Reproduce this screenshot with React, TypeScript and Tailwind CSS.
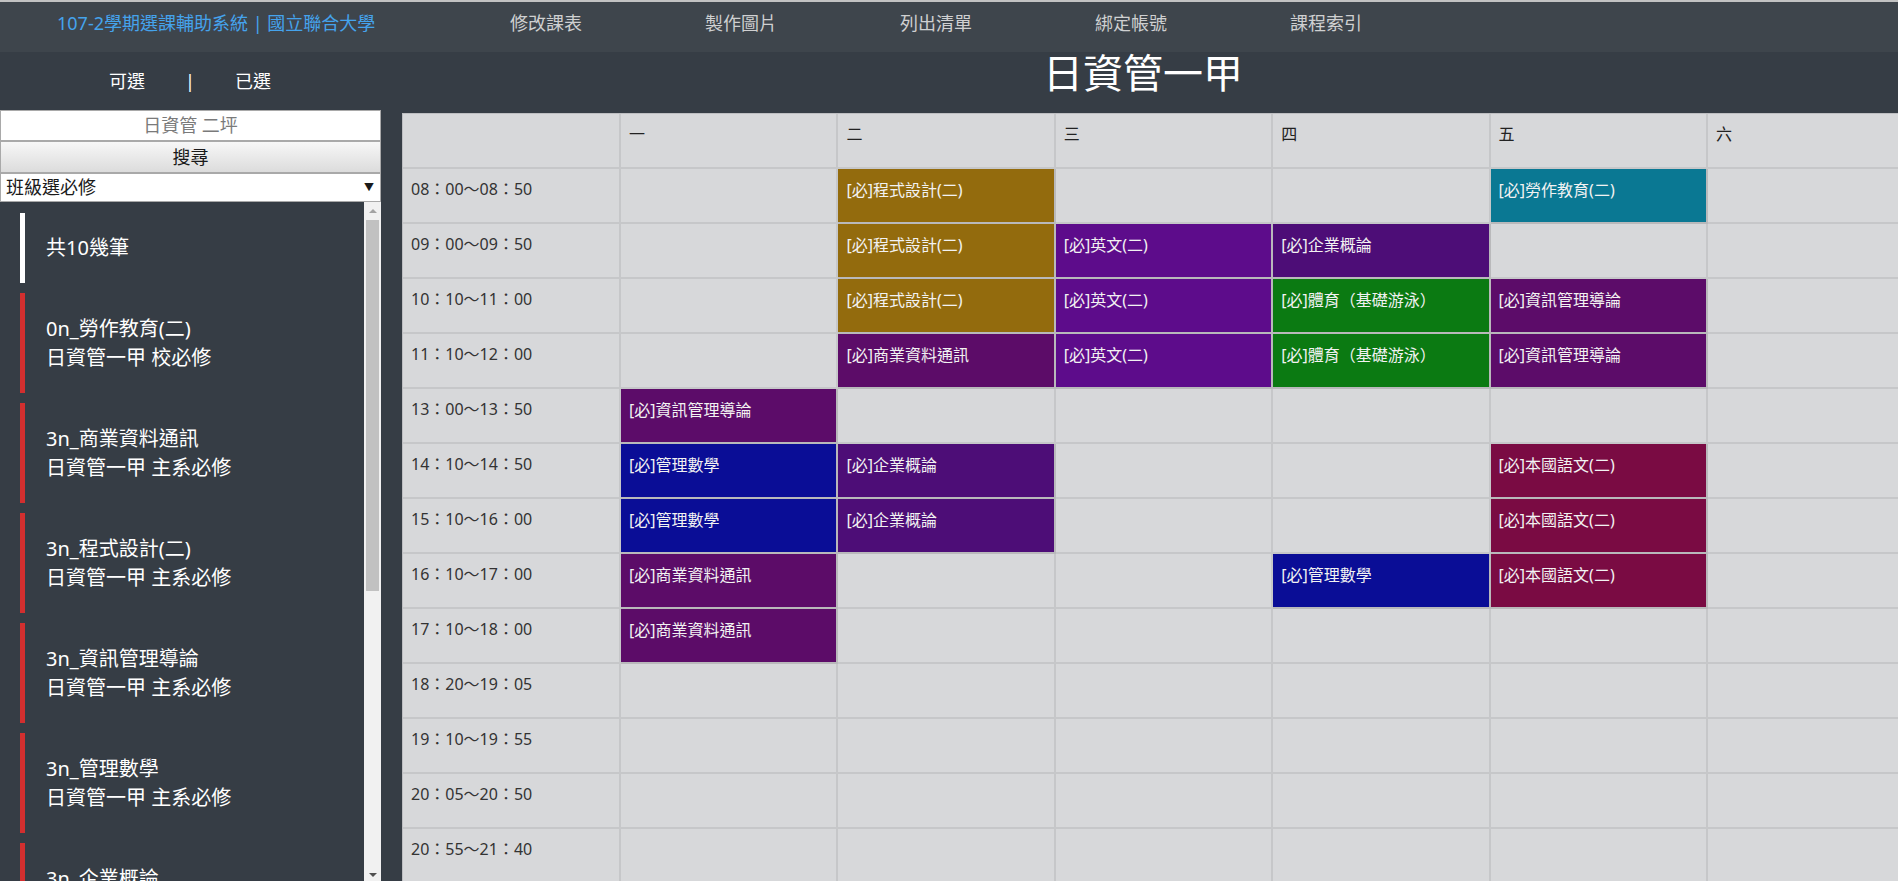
const NAV = ["修改課表", "製作圖片", "列出清單", "綁定帳號", "課程索引"];

const DAYS = ["一", "二", "三", "四", "五", "六"];

const TIMES = [
  "08：00～08：50",
  "09：00～09：50",
  "10：10～11：00",
  "11：10～12：00",
  "13：00～13：50",
  "14：10～14：50",
  "15：10～16：00",
  "16：10～17：00",
  "17：10～18：00",
  "18：20～19：05",
  "19：10～19：55",
  "20：05～20：50",
  "20：55～21：40",
];

type Course = { name: string; bg: string };

const PROG: Course = { name: "[必]程式設計(二)", bg: "bg-[#936b0d]" };
const ENG: Course = { name: "[必]英文(二)", bg: "bg-[#5d0c8b]" };
const BIZ: Course = { name: "[必]企業概論", bg: "bg-[#4d0d77]" };
const PE: Course = { name: "[必]體育（基礎游泳）", bg: "bg-[#0b7a12]" };
const LABOR: Course = { name: "[必]勞作教育(二)", bg: "bg-[#0a7893]" };
const MIS: Course = { name: "[必]資訊管理導論", bg: "bg-[#5c0c69]" };
const COMM: Course = { name: "[必]商業資料通訊", bg: "bg-[#5c0c68]" };
const MATH: Course = { name: "[必]管理數學", bg: "bg-[#0a0d96]" };
const CHIN: Course = { name: "[必]本國語文(二)", bg: "bg-[#7a0b43]" };

const _ = null;

const SCHEDULE: (Course | null)[][] = [
  [_, PROG, _, _, LABOR, _],
  [_, PROG, ENG, BIZ, _, _],
  [_, PROG, ENG, PE, MIS, _],
  [_, COMM, ENG, PE, MIS, _],
  [MIS, _, _, _, _, _],
  [MATH, BIZ, _, _, CHIN, _],
  [MATH, BIZ, _, _, CHIN, _],
  [COMM, _, _, MATH, CHIN, _],
  [COMM, _, _, _, _, _],
  [_, _, _, _, _, _],
  [_, _, _, _, _, _],
  [_, _, _, _, _, _],
  [_, _, _, _, _, _],
];

const LIST = [
  { title: "0n_勞作教育(二)", sub: "日資管一甲 校必修" },
  { title: "3n_商業資料通訊", sub: "日資管一甲 主系必修" },
  { title: "3n_程式設計(二)", sub: "日資管一甲 主系必修" },
  { title: "3n_資訊管理導論", sub: "日資管一甲 主系必修" },
  { title: "3n_管理數學", sub: "日資管一甲 主系必修" },
  { title: "3n_企業概論", sub: "日資管一甲 主系必修" },
  { title: "3n_英文(二)", sub: "日資管一甲 校必修" },
];

export default function App() {
  return (
    <div className="h-screen w-full overflow-hidden bg-[#363d45] font-['Noto_Sans','Noto_Sans_CJK_TC',sans-serif]">
      {/* top nav */}
      <div className="flex h-[52px] border-t-2 border-[#c2c2c2] bg-[#3e454c] pt-[9px]">
        <div className="w-[510px] pl-[57px] text-[18px] leading-[24px] text-[#45a3ec]">
          107-2學期選課輔助系統 | 國立聯合大學
        </div>
        {NAV.map((n) => (
          <div key={n} className="w-[195px] text-[18px] leading-[24px] text-[#cfd0d1]">
            {n}
          </div>
        ))}
      </div>

      <div className="flex">
        {/* sidebar */}
        <div className="flex w-[381px] shrink-0 flex-col">
          <div className="flex h-[58px] items-center text-[18px] text-white">
            <span className="ml-[109px]">可選</span>
            <span className="ml-[40px]">|</span>
            <span className="ml-[40px]">已選</span>
          </div>
          <div className="flex h-[31px] items-center justify-center border border-[#a9a9a9] bg-white text-[18px] text-[#7a7a7a]">
            日資管 二坪
          </div>
          <div className="flex h-[32px] items-center justify-center border border-[#a9a9a9] bg-gradient-to-b from-[#f7f7f7] to-[#dcdcdc] text-[18px] text-[#1a1a1a]">
            搜尋
          </div>
          <div className="flex h-[29px] items-center justify-between border border-[#a9a9a9] bg-white pl-[5px] pr-[6px] text-[18px] text-[#1a1a1a]">
            <span>班級選必修</span>
            <span className="text-[10px]">▼</span>
          </div>
          <div className="flex h-[680px]">
            <div className="flex-1 overflow-hidden pt-[11px]">
              <div className="mb-[10px] ml-[20px] border-l-[5px] border-white py-[21px] pl-[21px] text-[20px] leading-[28px] text-white">
                共10幾筆
              </div>
              {LIST.map((it) => (
                <div
                  key={it.title}
                  className="mb-[10px] ml-[20px] border-l-[5px] border-[#d32f2f] py-[21px] pl-[21px] text-[20px] leading-[29px] text-white"
                >
                  <div>{it.title}</div>
                  <div>{it.sub}</div>
                </div>
              ))}
            </div>
            <div className="flex w-[17px] flex-col items-center bg-[#f1f1f1]">
              <div className="mt-[7px] h-0 w-0 border-x-[4px] border-b-[4px] border-x-transparent border-b-[#a3a3a3]" />
              <div className="mt-[7px] h-[371px] w-[13px] bg-[#c1c1c1]" />
              <div className="flex-1" />
              <div className="mb-[5px] h-0 w-0 border-x-[4px] border-t-[4px] border-x-transparent border-t-[#505050]" />
            </div>
          </div>
        </div>

        {/* main */}
        <div className="min-w-0 flex-1">
          <div className="h-[61px] pl-[7px] pt-[1px] text-center text-[40px] leading-[40px] text-white">
            日資管一甲
          </div>
          <div className="ml-[21px] grid w-[1523px] grid-cols-[218px_repeat(6,217.4px)] auto-rows-[55px] border-l border-t border-[#bdbec1] bg-[#d7d8da] text-[16px] leading-[24px]">
            <div className="border-b-2 border-r-2 border-[#c6c7c9]" />
            {DAYS.map((d) => (
              <div key={d} className="border-b-2 border-r-2 border-[#c6c7c9] px-[8px] pt-[8px] text-[#222]">
                {d}
              </div>
            ))}
            {TIMES.map((t, r) => (
              <>
                <div key={t} className="border-b-2 border-r-2 border-[#c6c7c9] px-[8px] pt-[8px] text-[#333]">
                  {t}
                </div>
                {SCHEDULE[r].map((c, i) =>
                  c ? (
                    <div
                      key={t + i}
                      className={`border-b-2 border-r-2 border-[#b9b9bb] px-[8px] pt-[9px] text-[#f2f2f2] ${c.bg}`}
                    >
                      {c.name}
                    </div>
                  ) : (
                    <div key={t + i} className="border-b-2 border-r-2 border-[#c6c7c9]" />
                  )
                )}
              </>
            ))}
          </div>
        </div>
      </div>
    </div>
  );
}
